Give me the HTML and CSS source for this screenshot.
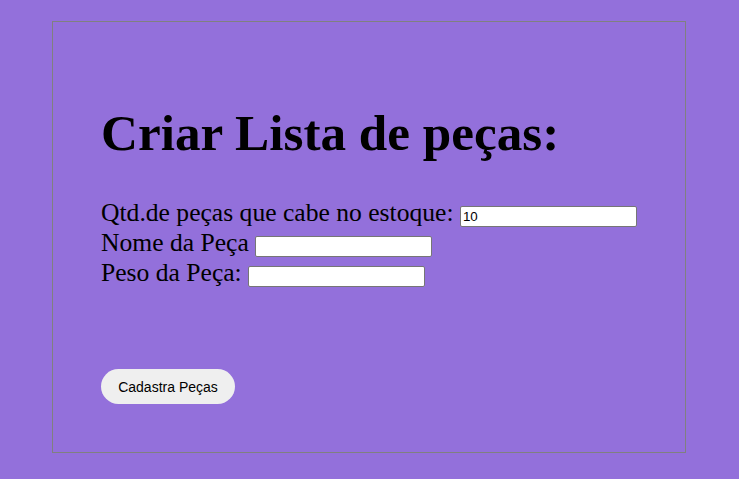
FILE: index.html
```html
<!DOCTYPE html>
<html lang="pt">
<head>
<meta charset="utf-8">
<title>Criar Lista de peças</title>
<link rel="stylesheet" href="styles.css">
</head>
<body>
<main class="box">
  <h1 class="title">Criar Lista de peças:</h1>
  <form class="form">
    <div class="row"><label>Qtd.de peças que cabe no estoque: </label><input class="field" type="text" value="10"></div>
    <div class="row"><label>Nome da Peça </label><input class="field" type="text"></div>
    <div class="row"><label>Peso da Peça: </label><input class="field" type="text"></div>
    <button class="btn" type="button">Cadastra Peças</button>
  </form>
</main>
</body>
</html>
```
FILE: styles.css
```css
html, body {
  margin: 0;
  background: #9370db;
}
body {
  padding: 21px 0 0 52px;
  font-family: "Liberation Serif", "Times New Roman", serif;
  color: #000;
}
.box {
  box-sizing: border-box;
  width: 634px;
  height: 432px;
  border: 1px solid #808080;
  padding: 0 48px;
}
.title {
  margin: 82px 0 36px;
  font-size: 51.2px;
  font-weight: bold;
  line-height: 58px;
}
.form {
  font-size: 25.6px;
}
.row {
  line-height: 30px;
}
.field {
  box-sizing: border-box;
  width: 177px;
  height: 21px;
  font-family: Arial, "Liberation Sans", sans-serif;
  font-size: 13.33px;
  padding: 1px 2px;
  border: 1px solid #767676;
  border-radius: 2px;
  background: #fff;
  vertical-align: baseline;
}
.btn {
  display: block;
  margin-top: 81px;
  width: 134px;
  height: 35px;
  border: none;
  border-radius: 18px;
  background: #efefef;
  font-family: Arial, "Liberation Sans", sans-serif;
  font-size: 14px;
  color: #000;
}
```
